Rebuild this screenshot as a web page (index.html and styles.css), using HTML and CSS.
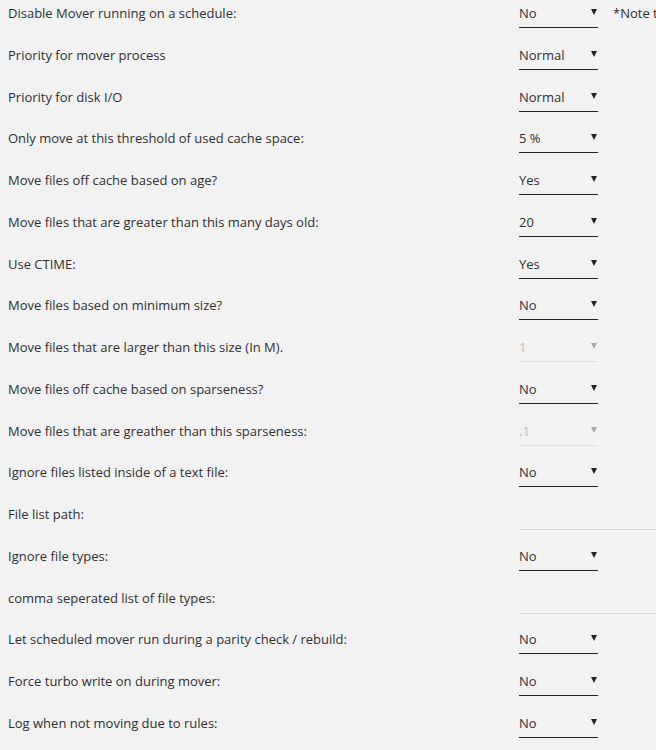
FILE: index.html
```html
<!DOCTYPE html>
<html lang="en">
<head>
    <meta charset="UTF-8">
    <meta name="viewport" content="width=device-width, initial-scale=1.0">
    <title>Mover Tuning</title>
    <link rel="stylesheet" href="styles.css">
</head>
<body>
    <form class="settings">
        <div class="row">
            <label>Disable Mover running on a schedule:</label>
            <span class="select"><select><option>No</option><option>Yes</option></select></span>
            <span class="note">*Note this will disable the mover schedule completely</span>
        </div>
        <div class="row">
            <label>Priority for mover process</label>
            <span class="select"><select><option>Normal</option><option>Low</option></select></span>
        </div>
        <div class="row">
            <label>Priority for disk I/O</label>
            <span class="select"><select><option>Normal</option><option>Low</option></select></span>
        </div>
        <div class="row">
            <label>Only move at this threshold of used cache space:</label>
            <span class="select"><select><option>5 %</option><option>10 %</option></select></span>
        </div>
        <div class="row">
            <label>Move files off cache based on age?</label>
            <span class="select"><select><option>Yes</option><option>No</option></select></span>
        </div>
        <div class="row">
            <label>Move files that are greater than this many days old:</label>
            <span class="select"><select><option>20</option><option>30</option></select></span>
        </div>
        <div class="row">
            <label>Use CTIME:</label>
            <span class="select"><select><option>Yes</option><option>No</option></select></span>
        </div>
        <div class="row">
            <label>Move files based on minimum size?</label>
            <span class="select"><select><option>No</option><option>Yes</option></select></span>
        </div>
        <div class="row">
            <label>Move files that are larger than this size (In M).</label>
            <span class="select disabled"><select disabled><option>1</option></select></span>
        </div>
        <div class="row">
            <label>Move files off cache based on sparseness?</label>
            <span class="select"><select><option>No</option><option>Yes</option></select></span>
        </div>
        <div class="row">
            <label>Move files that are greather than this sparseness:</label>
            <span class="select disabled"><select disabled><option>.1</option></select></span>
        </div>
        <div class="row">
            <label>Ignore files listed inside of a text file:</label>
            <span class="select"><select><option>No</option><option>Yes</option></select></span>
        </div>
        <div class="row">
            <label>File list path:</label>
            <input type="text" class="text-input">
        </div>
        <div class="row">
            <label>Ignore file types:</label>
            <span class="select"><select><option>No</option><option>Yes</option></select></span>
        </div>
        <div class="row">
            <label>comma seperated list of file types:</label>
            <input type="text" class="text-input">
        </div>
        <div class="row">
            <label>Let scheduled mover run during a parity check / rebuild:</label>
            <span class="select"><select><option>No</option><option>Yes</option></select></span>
        </div>
        <div class="row">
            <label>Force turbo write on during mover:</label>
            <span class="select"><select><option>No</option><option>Yes</option></select></span>
        </div>
        <div class="row">
            <label>Log when not moving due to rules:</label>
            <span class="select"><select><option>No</option><option>Yes</option></select></span>
        </div>
    </form>
</body>
</html>
```

FILE: styles.css
```css
html {
    overflow: hidden;
}
body {
    margin: 0;
    background: #f2f2f2;
    color: #303030;
    font-family: "Open Sans", "Noto Sans", sans-serif;
    font-size: 13px;
}
.settings {
    padding-left: 8px;
}
.row {
    display: grid;
    grid-template-columns: 511px 79px max-content;
    height: 41.75px;
    align-items: start;
    white-space: nowrap;
}
.row label {
    line-height: 26px;
}
.note {
    margin-left: 15px;
    line-height: 26px;
}
.select {
    position: relative;
    display: block;
    height: 28px;
}
.select select {
    appearance: none;
    -webkit-appearance: none;
    display: block;
    width: 100%;
    height: 28px;
    margin: 0;
    padding: 0 0 1px 0;
    border: none;
    border-bottom: 1px solid #222;
    border-radius: 0;
    background: transparent;
    color: #303030;
    font: inherit;
    line-height: 26px;
}
.select::after {
    content: "";
    position: absolute;
    right: 1px;
    top: 9px;
    border-left: 3px solid transparent;
    border-right: 3px solid transparent;
    border-top: 6px solid #222;
    pointer-events: none;
}
.select.disabled select {
    color: #a8a8a8;
    border-bottom-color: #d6d6d6;
}
.select.disabled::after {
    border-top-color: #a8a8a8;
}
.text-input {
    grid-column: 2 / 4;
    width: 300px;
    height: 28px;
    margin: 0;
    padding: 0;
    border: none;
    border-bottom: 1px solid #d6d6d6;
    background: transparent;
    font: inherit;
}
```
